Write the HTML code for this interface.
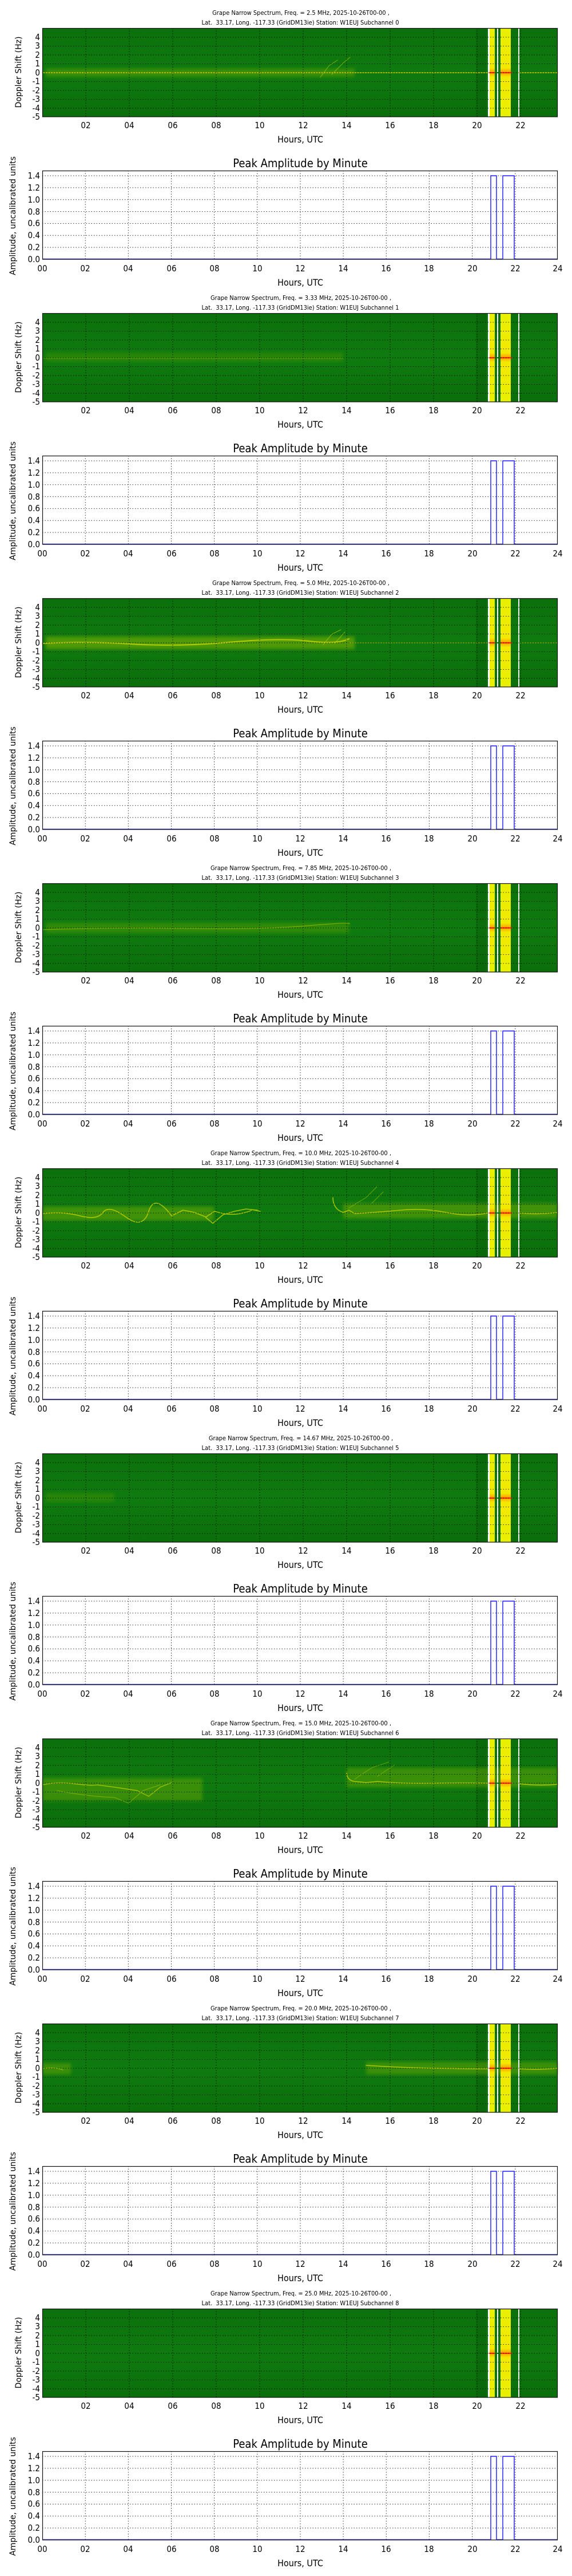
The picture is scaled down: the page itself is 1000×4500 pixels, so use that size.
<!DOCTYPE html>
<html><head><meta charset="utf-8">
<style>
html,body{margin:0;padding:0;background:#fff;width:1000px;height:4500px;overflow:hidden}
svg{display:block}
.t{font-family:"Liberation Sans Narrow","DejaVu Sans Condensed","Liberation Sans",sans-serif;font-size:11px;fill:#000}
.k{font-family:"Liberation Sans Narrow","DejaVu Sans Condensed","Liberation Sans",sans-serif;font-size:15px;fill:#000}
.h{font-family:"Liberation Sans Narrow","DejaVu Sans Condensed","Liberation Sans",sans-serif;font-size:16px;fill:#000}
.p{font-family:"Liberation Sans Narrow","DejaVu Sans Condensed","Liberation Sans",sans-serif;font-size:20px;fill:#000}
.y{font-family:"DejaVu Sans","Liberation Sans",sans-serif;font-size:14px;fill:#000}
.tr{fill:none;stroke:#c6d400;stroke-linecap:round;stroke-linejoin:round}
</style></head><body>
<svg width="1000" height="4500" viewBox="0 0 1000 4500" xmlns="http://www.w3.org/2000/svg">
<defs>
<linearGradient id="gv" x1="0" y1="0" x2="0" y2="1">
<stop offset="0" stop-color="#0c700c"/><stop offset="0.5" stop-color="#0f7b0f"/><stop offset="1" stop-color="#0b6e0b"/>
</linearGradient>
<linearGradient id="yb" x1="0" y1="0" x2="0" y2="1">
<stop offset="0" stop-color="#e8f000"/><stop offset="0.45" stop-color="#f3e800"/><stop offset="0.5" stop-color="#ff9a00"/><stop offset="0.55" stop-color="#f3e800"/><stop offset="1" stop-color="#e8f000"/>
</linearGradient>
<filter id="bl" x="-10%" y="-50%" width="120%" height="200%"><feGaussianBlur stdDeviation="3"/></filter>
<g id="specbg">
<rect x="74" y="49" width="901" height="155" fill="url(#gv)"/>
<rect x="832" y="49" width="18" height="155" fill="#0a640a" opacity="0.6"/>
</g>
<g id="specfg">
<rect x="853" y="49" width="3" height="155" fill="#fff"/>
<rect x="856" y="49" width="9" height="155" fill="url(#yb)"/>
<rect x="869" y="49" width="2" height="155" fill="#fff"/>
<rect x="875" y="49" width="18" height="155" fill="url(#yb)"/>
<rect x="855" y="126" width="40" height="2" fill="#ff2a00"/>
<rect x="865" y="126" width="10" height="2" fill="#0f7b0f"/>
<rect x="906" y="49" width="2" height="155" fill="#eee"/>
<g stroke="#000" stroke-width="1" stroke-dasharray="1.5,3" opacity="0.8">
<path d="M150 49V204M226 49V204M302 49V204M378 49V204M454 49V204M530 49V204M606 49V204M682 49V204M758 49V204M834 49V204M910 49V204"/>
<path d="M74 65H975M74 80.5H975M74 96H975M74 111.5H975M74 127H975M74 142.5H975M74 158H975M74 173.5H975M74 189H975"/>
</g>
<rect x="74.5" y="49.5" width="900" height="154.5" fill="none" stroke="#111" stroke-width="1.2"/>
</g>
<g id="amp">
<rect x="74" y="298" width="901" height="155" fill="#fff"/>
<g stroke="#000" stroke-width="1" stroke-dasharray="1.5,3" opacity="0.8">
<path d="M149.2 298V453M224.3 298V453M299.5 298V453M374.6 298V453M449.8 298V453M525 298V453M600.1 298V453M675.3 298V453M750.4 298V453M825.6 298V453M900.8 298V453"/>
<path d="M74 432.1H975M74 411.3H975M74 390.4H975M74 369.6H975M74 348.7H975M74 327.9H975M74 307H975"/>
</g>
<path d="M74 452.5H858V307H868V452.5H879V307H899V452.5H975" fill="none" stroke="#1a1aff" stroke-width="1.4"/>
<rect x="74.5" y="298.5" width="900" height="154.5" fill="none" stroke="#111" stroke-width="1.2"/>
</g>
</defs>

<!-- SECTION 0 -->
<g transform="translate(0,0)">
<text class="t" x="526" y="26" text-anchor="middle">Grape Narrow Spectrum, Freq. = 2.5 MHz, 2025-10-26T00-00 ,</text>
<text class="t" x="525" y="43" text-anchor="middle">Lat.&#160; 33.17, Long. -117.33 (GridDM13ie) Station: W1EUJ Subchannel 0</text>
<use href="#specbg"/>
<rect x="80" y="120" width="540" height="14" fill="#8cb800" opacity="0.35" filter="url(#bl)"/>
<path class="tr" d="M74 127H853M908 127H975" stroke-width="1.6"/>
<path class="tr" d="M560 135L575 115L590 105M580 130L600 110L612 100" stroke-width="1" opacity="0.6"/>
<use href="#specfg"/>
<text class="y" transform="translate(37,126) rotate(-90)" text-anchor="middle">Doppler Shift (Hz)</text>
<g class="k" text-anchor="end"><text x="70" y="70">4</text><text x="70" y="85">3</text><text x="70" y="101">2</text><text x="70" y="116">1</text><text x="70" y="132">0</text><text x="70" y="147">-1</text><text x="70" y="163">-2</text><text x="70" y="178">-3</text><text x="70" y="194">-4</text><text x="70" y="209">-5</text></g>
<g class="k" text-anchor="middle"><text x="150" y="224">02</text><text x="226" y="224">04</text><text x="302" y="224">06</text><text x="378" y="224">08</text><text x="454" y="224">10</text><text x="530" y="224">12</text><text x="606" y="224">14</text><text x="682" y="224">16</text><text x="758" y="224">18</text><text x="834" y="224">20</text><text x="910" y="224">22</text></g>
<text class="h" x="525" y="249" text-anchor="middle">Hours, UTC</text>
<text class="p" x="525" y="292" text-anchor="middle">Peak Amplitude by Minute</text>
<use href="#amp"/>
<text class="y" transform="translate(27,377) rotate(-90)" text-anchor="middle">Amplitude, uncalibrated units</text>
<g class="k" text-anchor="end"><text x="70" y="458">0.0</text><text x="70" y="437">0.2</text><text x="70" y="416">0.4</text><text x="70" y="395">0.6</text><text x="70" y="375">0.8</text><text x="70" y="354">1.0</text><text x="70" y="333">1.2</text><text x="70" y="312">1.4</text></g>
<g class="k" text-anchor="middle"><text x="74" y="474">00</text><text x="149" y="474">02</text><text x="224" y="474">04</text><text x="300" y="474">06</text><text x="375" y="474">08</text><text x="450" y="474">10</text><text x="525" y="474">12</text><text x="600" y="474">14</text><text x="675" y="474">16</text><text x="750" y="474">18</text><text x="826" y="474">20</text><text x="901" y="474">22</text><text x="975" y="474">24</text></g>
<text class="h" x="525" y="499" text-anchor="middle">Hours, UTC</text>
</g>

<!-- SECTION 1 -->
<g transform="translate(0,498)">
<text class="t" x="526" y="26" text-anchor="middle">Grape Narrow Spectrum, Freq. = 3.33 MHz, 2025-10-26T00-00 ,</text>
<text class="t" x="525" y="43" text-anchor="middle">Lat.&#160; 33.17, Long. -117.33 (GridDM13ie) Station: W1EUJ Subchannel 1</text>
<use href="#specbg"/>
<rect x="80" y="118" width="520" height="16" fill="#5ea000" opacity="0.3" filter="url(#bl)"/>
<path class="tr" d="M74 128H600" stroke-width="1" opacity="0.35"/>
<use href="#specfg"/>
<text class="y" transform="translate(37,126) rotate(-90)" text-anchor="middle">Doppler Shift (Hz)</text>
<g class="k" text-anchor="end"><text x="70" y="70">4</text><text x="70" y="85">3</text><text x="70" y="101">2</text><text x="70" y="116">1</text><text x="70" y="132">0</text><text x="70" y="147">-1</text><text x="70" y="163">-2</text><text x="70" y="178">-3</text><text x="70" y="194">-4</text><text x="70" y="209">-5</text></g>
<g class="k" text-anchor="middle"><text x="150" y="224">02</text><text x="226" y="224">04</text><text x="302" y="224">06</text><text x="378" y="224">08</text><text x="454" y="224">10</text><text x="530" y="224">12</text><text x="606" y="224">14</text><text x="682" y="224">16</text><text x="758" y="224">18</text><text x="834" y="224">20</text><text x="910" y="224">22</text></g>
<text class="h" x="525" y="249" text-anchor="middle">Hours, UTC</text>
<text class="p" x="525" y="292" text-anchor="middle">Peak Amplitude by Minute</text>
<use href="#amp"/>
<text class="y" transform="translate(27,377) rotate(-90)" text-anchor="middle">Amplitude, uncalibrated units</text>
<g class="k" text-anchor="end"><text x="70" y="458">0.0</text><text x="70" y="437">0.2</text><text x="70" y="416">0.4</text><text x="70" y="395">0.6</text><text x="70" y="375">0.8</text><text x="70" y="354">1.0</text><text x="70" y="333">1.2</text><text x="70" y="312">1.4</text></g>
<g class="k" text-anchor="middle"><text x="74" y="474">00</text><text x="149" y="474">02</text><text x="224" y="474">04</text><text x="300" y="474">06</text><text x="375" y="474">08</text><text x="450" y="474">10</text><text x="525" y="474">12</text><text x="600" y="474">14</text><text x="675" y="474">16</text><text x="750" y="474">18</text><text x="826" y="474">20</text><text x="901" y="474">22</text><text x="975" y="474">24</text></g>
<text class="h" x="525" y="499" text-anchor="middle">Hours, UTC</text>
</g>

<!-- SECTION 2 -->
<g transform="translate(0,996)">
<text class="t" x="526" y="26" text-anchor="middle">Grape Narrow Spectrum, Freq. = 5.0 MHz, 2025-10-26T00-00 ,</text>
<text class="t" x="525" y="43" text-anchor="middle">Lat.&#160; 33.17, Long. -117.33 (GridDM13ie) Station: W1EUJ Subchannel 2</text>
<use href="#specbg"/>
<rect x="80" y="116" width="540" height="22" fill="#9cc000" opacity="0.45" filter="url(#bl)"/>
<path class="tr" d="M74 128Q150 124 230 129T400 126T540 124T610 120" stroke-width="2.2" opacity="0.8"/>
<path class="tr" d="M610 127H853M908 127H975" stroke-width="1.2" opacity="0.6"/>
<path class="tr" d="M565 130L580 112L596 104M585 128L603 108" stroke-width="1" opacity="0.6"/>
<use href="#specfg"/>
<text class="y" transform="translate(37,126) rotate(-90)" text-anchor="middle">Doppler Shift (Hz)</text>
<g class="k" text-anchor="end"><text x="70" y="70">4</text><text x="70" y="85">3</text><text x="70" y="101">2</text><text x="70" y="116">1</text><text x="70" y="132">0</text><text x="70" y="147">-1</text><text x="70" y="163">-2</text><text x="70" y="178">-3</text><text x="70" y="194">-4</text><text x="70" y="209">-5</text></g>
<g class="k" text-anchor="middle"><text x="150" y="224">02</text><text x="226" y="224">04</text><text x="302" y="224">06</text><text x="378" y="224">08</text><text x="454" y="224">10</text><text x="530" y="224">12</text><text x="606" y="224">14</text><text x="682" y="224">16</text><text x="758" y="224">18</text><text x="834" y="224">20</text><text x="910" y="224">22</text></g>
<text class="h" x="525" y="249" text-anchor="middle">Hours, UTC</text>
<text class="p" x="525" y="292" text-anchor="middle">Peak Amplitude by Minute</text>
<use href="#amp"/>
<text class="y" transform="translate(27,377) rotate(-90)" text-anchor="middle">Amplitude, uncalibrated units</text>
<g class="k" text-anchor="end"><text x="70" y="458">0.0</text><text x="70" y="437">0.2</text><text x="70" y="416">0.4</text><text x="70" y="395">0.6</text><text x="70" y="375">0.8</text><text x="70" y="354">1.0</text><text x="70" y="333">1.2</text><text x="70" y="312">1.4</text></g>
<g class="k" text-anchor="middle"><text x="74" y="474">00</text><text x="149" y="474">02</text><text x="224" y="474">04</text><text x="300" y="474">06</text><text x="375" y="474">08</text><text x="450" y="474">10</text><text x="525" y="474">12</text><text x="600" y="474">14</text><text x="675" y="474">16</text><text x="750" y="474">18</text><text x="826" y="474">20</text><text x="901" y="474">22</text><text x="975" y="474">24</text></g>
<text class="h" x="525" y="499" text-anchor="middle">Hours, UTC</text>
</g>

<!-- SECTION 3 -->
<g transform="translate(0,1494)">
<text class="t" x="526" y="26" text-anchor="middle">Grape Narrow Spectrum, Freq. = 7.85 MHz, 2025-10-26T00-00 ,</text>
<text class="t" x="525" y="43" text-anchor="middle">Lat.&#160; 33.17, Long. -117.33 (GridDM13ie) Station: W1EUJ Subchannel 3</text>
<use href="#specbg"/>
<rect x="80" y="118" width="530" height="18" fill="#70a800" opacity="0.35" filter="url(#bl)"/>
<path class="tr" d="M74 130Q200 126 330 128T540 123T610 120" stroke-width="1.2" opacity="0.5"/>
<use href="#specfg"/>
<text class="y" transform="translate(37,126) rotate(-90)" text-anchor="middle">Doppler Shift (Hz)</text>
<g class="k" text-anchor="end"><text x="70" y="70">4</text><text x="70" y="85">3</text><text x="70" y="101">2</text><text x="70" y="116">1</text><text x="70" y="132">0</text><text x="70" y="147">-1</text><text x="70" y="163">-2</text><text x="70" y="178">-3</text><text x="70" y="194">-4</text><text x="70" y="209">-5</text></g>
<g class="k" text-anchor="middle"><text x="150" y="224">02</text><text x="226" y="224">04</text><text x="302" y="224">06</text><text x="378" y="224">08</text><text x="454" y="224">10</text><text x="530" y="224">12</text><text x="606" y="224">14</text><text x="682" y="224">16</text><text x="758" y="224">18</text><text x="834" y="224">20</text><text x="910" y="224">22</text></g>
<text class="h" x="525" y="249" text-anchor="middle">Hours, UTC</text>
<text class="p" x="525" y="292" text-anchor="middle">Peak Amplitude by Minute</text>
<use href="#amp"/>
<text class="y" transform="translate(27,377) rotate(-90)" text-anchor="middle">Amplitude, uncalibrated units</text>
<g class="k" text-anchor="end"><text x="70" y="458">0.0</text><text x="70" y="437">0.2</text><text x="70" y="416">0.4</text><text x="70" y="395">0.6</text><text x="70" y="375">0.8</text><text x="70" y="354">1.0</text><text x="70" y="333">1.2</text><text x="70" y="312">1.4</text></g>
<g class="k" text-anchor="middle"><text x="74" y="474">00</text><text x="149" y="474">02</text><text x="224" y="474">04</text><text x="300" y="474">06</text><text x="375" y="474">08</text><text x="450" y="474">10</text><text x="525" y="474">12</text><text x="600" y="474">14</text><text x="675" y="474">16</text><text x="750" y="474">18</text><text x="826" y="474">20</text><text x="901" y="474">22</text><text x="975" y="474">24</text></g>
<text class="h" x="525" y="499" text-anchor="middle">Hours, UTC</text>
</g>

<!-- SECTION 4 -->
<g transform="translate(0,1992)">
<text class="t" x="526" y="26" text-anchor="middle">Grape Narrow Spectrum, Freq. = 10.0 MHz, 2025-10-26T00-00 ,</text>
<text class="t" x="525" y="43" text-anchor="middle">Lat.&#160; 33.17, Long. -117.33 (GridDM13ie) Station: W1EUJ Subchannel 4</text>
<use href="#specbg"/>
<rect x="74" y="116" width="300" height="24" fill="#8cb800" opacity="0.4" filter="url(#bl)"/>
<rect x="600" y="110" width="375" height="26" fill="#8cb800" opacity="0.4" filter="url(#bl)"/>
<path class="tr" d="M74 128Q110 124 140 132T180 126T220 134T260 124T300 132L320 122L340 126L360 134L375 124Q400 132 420 128T440 121L455 124M360 135L372 145L390 130L410 124L430 120L450 122" stroke-width="1.6" opacity="0.8"/>
<path class="tr" d="M582 100Q582 120 600 126L610 122L620 128Q660 126 700 122T780 126T853 127M908 127Q940 130 975 126" stroke-width="1.6" opacity="0.8"/>
<path class="tr" d="M610 118L640 100L660 80M650 110L670 90" stroke-width="1" opacity="0.5"/>
<use href="#specfg"/>
<text class="y" transform="translate(37,126) rotate(-90)" text-anchor="middle">Doppler Shift (Hz)</text>
<g class="k" text-anchor="end"><text x="70" y="70">4</text><text x="70" y="85">3</text><text x="70" y="101">2</text><text x="70" y="116">1</text><text x="70" y="132">0</text><text x="70" y="147">-1</text><text x="70" y="163">-2</text><text x="70" y="178">-3</text><text x="70" y="194">-4</text><text x="70" y="209">-5</text></g>
<g class="k" text-anchor="middle"><text x="150" y="224">02</text><text x="226" y="224">04</text><text x="302" y="224">06</text><text x="378" y="224">08</text><text x="454" y="224">10</text><text x="530" y="224">12</text><text x="606" y="224">14</text><text x="682" y="224">16</text><text x="758" y="224">18</text><text x="834" y="224">20</text><text x="910" y="224">22</text></g>
<text class="h" x="525" y="249" text-anchor="middle">Hours, UTC</text>
<text class="p" x="525" y="292" text-anchor="middle">Peak Amplitude by Minute</text>
<use href="#amp"/>
<text class="y" transform="translate(27,377) rotate(-90)" text-anchor="middle">Amplitude, uncalibrated units</text>
<g class="k" text-anchor="end"><text x="70" y="458">0.0</text><text x="70" y="437">0.2</text><text x="70" y="416">0.4</text><text x="70" y="395">0.6</text><text x="70" y="375">0.8</text><text x="70" y="354">1.0</text><text x="70" y="333">1.2</text><text x="70" y="312">1.4</text></g>
<g class="k" text-anchor="middle"><text x="74" y="474">00</text><text x="149" y="474">02</text><text x="224" y="474">04</text><text x="300" y="474">06</text><text x="375" y="474">08</text><text x="450" y="474">10</text><text x="525" y="474">12</text><text x="600" y="474">14</text><text x="675" y="474">16</text><text x="750" y="474">18</text><text x="826" y="474">20</text><text x="901" y="474">22</text><text x="975" y="474">24</text></g>
<text class="h" x="525" y="499" text-anchor="middle">Hours, UTC</text>
</g>

<!-- SECTION 5 -->
<g transform="translate(0,2490)">
<text class="t" x="526" y="26" text-anchor="middle">Grape Narrow Spectrum, Freq. = 14.67 MHz, 2025-10-26T00-00 ,</text>
<text class="t" x="525" y="43" text-anchor="middle">Lat.&#160; 33.17, Long. -117.33 (GridDM13ie) Station: W1EUJ Subchannel 5</text>
<use href="#specbg"/>
<rect x="80" y="118" width="120" height="16" fill="#5ea000" opacity="0.3" filter="url(#bl)"/>
<use href="#specfg"/>
<text class="y" transform="translate(37,126) rotate(-90)" text-anchor="middle">Doppler Shift (Hz)</text>
<g class="k" text-anchor="end"><text x="70" y="70">4</text><text x="70" y="85">3</text><text x="70" y="101">2</text><text x="70" y="116">1</text><text x="70" y="132">0</text><text x="70" y="147">-1</text><text x="70" y="163">-2</text><text x="70" y="178">-3</text><text x="70" y="194">-4</text><text x="70" y="209">-5</text></g>
<g class="k" text-anchor="middle"><text x="150" y="224">02</text><text x="226" y="224">04</text><text x="302" y="224">06</text><text x="378" y="224">08</text><text x="454" y="224">10</text><text x="530" y="224">12</text><text x="606" y="224">14</text><text x="682" y="224">16</text><text x="758" y="224">18</text><text x="834" y="224">20</text><text x="910" y="224">22</text></g>
<text class="h" x="525" y="249" text-anchor="middle">Hours, UTC</text>
<text class="p" x="525" y="292" text-anchor="middle">Peak Amplitude by Minute</text>
<use href="#amp"/>
<text class="y" transform="translate(27,377) rotate(-90)" text-anchor="middle">Amplitude, uncalibrated units</text>
<g class="k" text-anchor="end"><text x="70" y="458">0.0</text><text x="70" y="437">0.2</text><text x="70" y="416">0.4</text><text x="70" y="395">0.6</text><text x="70" y="375">0.8</text><text x="70" y="354">1.0</text><text x="70" y="333">1.2</text><text x="70" y="312">1.4</text></g>
<g class="k" text-anchor="middle"><text x="74" y="474">00</text><text x="149" y="474">02</text><text x="224" y="474">04</text><text x="300" y="474">06</text><text x="375" y="474">08</text><text x="450" y="474">10</text><text x="525" y="474">12</text><text x="600" y="474">14</text><text x="675" y="474">16</text><text x="750" y="474">18</text><text x="826" y="474">20</text><text x="901" y="474">22</text><text x="975" y="474">24</text></g>
<text class="h" x="525" y="499" text-anchor="middle">Hours, UTC</text>
</g>

<!-- SECTION 6 -->
<g transform="translate(0,2988)">
<text class="t" x="526" y="26" text-anchor="middle">Grape Narrow Spectrum, Freq. = 15.0 MHz, 2025-10-26T00-00 ,</text>
<text class="t" x="525" y="43" text-anchor="middle">Lat.&#160; 33.17, Long. -117.33 (GridDM13ie) Station: W1EUJ Subchannel 6</text>
<use href="#specbg"/>
<rect x="74" y="118" width="280" height="40" fill="#8cb800" opacity="0.35" filter="url(#bl)"/>
<rect x="606" y="100" width="369" height="34" fill="#8cb800" opacity="0.35" filter="url(#bl)"/>
<path class="tr" d="M74 130Q100 124 130 128T170 130L200 134L240 140L260 150L280 134L300 126" stroke-width="1.4" opacity="0.7"/>
<path class="tr" d="M100 140Q150 150 200 152L225 162L250 140L280 130" stroke-width="1" opacity="0.5"/>
<path class="tr" d="M606 108Q606 122 620 124L640 126L660 124Q700 128 760 127T853 127M908 128Q940 132 975 129" stroke-width="1.6" opacity="0.8"/>
<path class="tr" d="M620 120L650 100L680 90M660 115L690 95" stroke-width="1" opacity="0.45"/>
<use href="#specfg"/>
<text class="y" transform="translate(37,126) rotate(-90)" text-anchor="middle">Doppler Shift (Hz)</text>
<g class="k" text-anchor="end"><text x="70" y="70">4</text><text x="70" y="85">3</text><text x="70" y="101">2</text><text x="70" y="116">1</text><text x="70" y="132">0</text><text x="70" y="147">-1</text><text x="70" y="163">-2</text><text x="70" y="178">-3</text><text x="70" y="194">-4</text><text x="70" y="209">-5</text></g>
<g class="k" text-anchor="middle"><text x="150" y="224">02</text><text x="226" y="224">04</text><text x="302" y="224">06</text><text x="378" y="224">08</text><text x="454" y="224">10</text><text x="530" y="224">12</text><text x="606" y="224">14</text><text x="682" y="224">16</text><text x="758" y="224">18</text><text x="834" y="224">20</text><text x="910" y="224">22</text></g>
<text class="h" x="525" y="249" text-anchor="middle">Hours, UTC</text>
<text class="p" x="525" y="292" text-anchor="middle">Peak Amplitude by Minute</text>
<use href="#amp"/>
<text class="y" transform="translate(27,377) rotate(-90)" text-anchor="middle">Amplitude, uncalibrated units</text>
<g class="k" text-anchor="end"><text x="70" y="458">0.0</text><text x="70" y="437">0.2</text><text x="70" y="416">0.4</text><text x="70" y="395">0.6</text><text x="70" y="375">0.8</text><text x="70" y="354">1.0</text><text x="70" y="333">1.2</text><text x="70" y="312">1.4</text></g>
<g class="k" text-anchor="middle"><text x="74" y="474">00</text><text x="149" y="474">02</text><text x="224" y="474">04</text><text x="300" y="474">06</text><text x="375" y="474">08</text><text x="450" y="474">10</text><text x="525" y="474">12</text><text x="600" y="474">14</text><text x="675" y="474">16</text><text x="750" y="474">18</text><text x="826" y="474">20</text><text x="901" y="474">22</text><text x="975" y="474">24</text></g>
<text class="h" x="525" y="499" text-anchor="middle">Hours, UTC</text>
</g>

<!-- SECTION 7 -->
<g transform="translate(0,3486)">
<text class="t" x="526" y="26" text-anchor="middle">Grape Narrow Spectrum, Freq. = 20.0 MHz, 2025-10-26T00-00 ,</text>
<text class="t" x="525" y="43" text-anchor="middle">Lat.&#160; 33.17, Long. -117.33 (GridDM13ie) Station: W1EUJ Subchannel 7</text>
<use href="#specbg"/>
<rect x="74" y="118" width="50" height="20" fill="#8cb800" opacity="0.35" filter="url(#bl)"/>
<rect x="640" y="116" width="335" height="22" fill="#8cb800" opacity="0.35" filter="url(#bl)"/>
<path class="tr" d="M640 122Q700 126 760 127T853 128M908 128Q940 130 975 127" stroke-width="1.6" opacity="0.8"/>
<path class="tr" d="M74 128Q95 124 110 130" stroke-width="1.2" opacity="0.6"/>
<use href="#specfg"/>
<text class="y" transform="translate(37,126) rotate(-90)" text-anchor="middle">Doppler Shift (Hz)</text>
<g class="k" text-anchor="end"><text x="70" y="70">4</text><text x="70" y="85">3</text><text x="70" y="101">2</text><text x="70" y="116">1</text><text x="70" y="132">0</text><text x="70" y="147">-1</text><text x="70" y="163">-2</text><text x="70" y="178">-3</text><text x="70" y="194">-4</text><text x="70" y="209">-5</text></g>
<g class="k" text-anchor="middle"><text x="150" y="224">02</text><text x="226" y="224">04</text><text x="302" y="224">06</text><text x="378" y="224">08</text><text x="454" y="224">10</text><text x="530" y="224">12</text><text x="606" y="224">14</text><text x="682" y="224">16</text><text x="758" y="224">18</text><text x="834" y="224">20</text><text x="910" y="224">22</text></g>
<text class="h" x="525" y="249" text-anchor="middle">Hours, UTC</text>
<text class="p" x="525" y="292" text-anchor="middle">Peak Amplitude by Minute</text>
<use href="#amp"/>
<text class="y" transform="translate(27,377) rotate(-90)" text-anchor="middle">Amplitude, uncalibrated units</text>
<g class="k" text-anchor="end"><text x="70" y="458">0.0</text><text x="70" y="437">0.2</text><text x="70" y="416">0.4</text><text x="70" y="395">0.6</text><text x="70" y="375">0.8</text><text x="70" y="354">1.0</text><text x="70" y="333">1.2</text><text x="70" y="312">1.4</text></g>
<g class="k" text-anchor="middle"><text x="74" y="474">00</text><text x="149" y="474">02</text><text x="224" y="474">04</text><text x="300" y="474">06</text><text x="375" y="474">08</text><text x="450" y="474">10</text><text x="525" y="474">12</text><text x="600" y="474">14</text><text x="675" y="474">16</text><text x="750" y="474">18</text><text x="826" y="474">20</text><text x="901" y="474">22</text><text x="975" y="474">24</text></g>
<text class="h" x="525" y="499" text-anchor="middle">Hours, UTC</text>
</g>

<!-- SECTION 8 -->
<g transform="translate(0,3984)">
<text class="t" x="526" y="26" text-anchor="middle">Grape Narrow Spectrum, Freq. = 25.0 MHz, 2025-10-26T00-00 ,</text>
<text class="t" x="525" y="43" text-anchor="middle">Lat.&#160; 33.17, Long. -117.33 (GridDM13ie) Station: W1EUJ Subchannel 8</text>
<use href="#specbg"/>
<use href="#specfg"/>
<text class="y" transform="translate(37,126) rotate(-90)" text-anchor="middle">Doppler Shift (Hz)</text>
<g class="k" text-anchor="end"><text x="70" y="70">4</text><text x="70" y="85">3</text><text x="70" y="101">2</text><text x="70" y="116">1</text><text x="70" y="132">0</text><text x="70" y="147">-1</text><text x="70" y="163">-2</text><text x="70" y="178">-3</text><text x="70" y="194">-4</text><text x="70" y="209">-5</text></g>
<g class="k" text-anchor="middle"><text x="150" y="224">02</text><text x="226" y="224">04</text><text x="302" y="224">06</text><text x="378" y="224">08</text><text x="454" y="224">10</text><text x="530" y="224">12</text><text x="606" y="224">14</text><text x="682" y="224">16</text><text x="758" y="224">18</text><text x="834" y="224">20</text><text x="910" y="224">22</text></g>
<text class="h" x="525" y="249" text-anchor="middle">Hours, UTC</text>
<text class="p" x="525" y="292" text-anchor="middle">Peak Amplitude by Minute</text>
<use href="#amp"/>
<text class="y" transform="translate(27,377) rotate(-90)" text-anchor="middle">Amplitude, uncalibrated units</text>
<g class="k" text-anchor="end"><text x="70" y="458">0.0</text><text x="70" y="437">0.2</text><text x="70" y="416">0.4</text><text x="70" y="395">0.6</text><text x="70" y="375">0.8</text><text x="70" y="354">1.0</text><text x="70" y="333">1.2</text><text x="70" y="312">1.4</text></g>
<g class="k" text-anchor="middle"><text x="74" y="474">00</text><text x="149" y="474">02</text><text x="224" y="474">04</text><text x="300" y="474">06</text><text x="375" y="474">08</text><text x="450" y="474">10</text><text x="525" y="474">12</text><text x="600" y="474">14</text><text x="675" y="474">16</text><text x="750" y="474">18</text><text x="826" y="474">20</text><text x="901" y="474">22</text><text x="975" y="474">24</text></g>
<text class="h" x="525" y="499" text-anchor="middle">Hours, UTC</text>
</g>
</svg>
</body></html>
